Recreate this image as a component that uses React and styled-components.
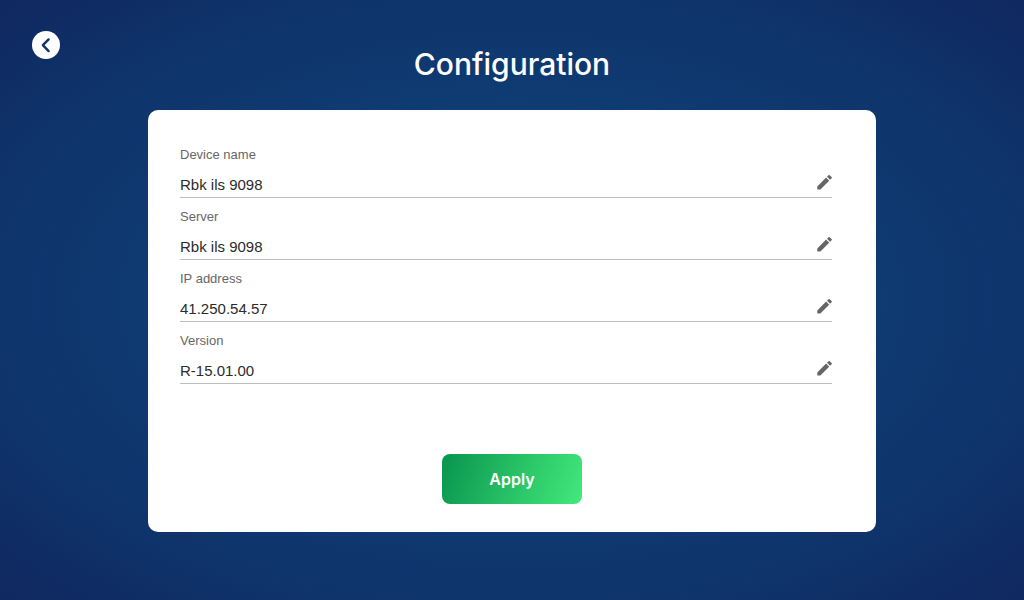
import React from "react";
import styled, { createGlobalStyle } from "styled-components";

const GlobalStyle = createGlobalStyle`
  * {
    box-sizing: border-box;
  }

  body {
    margin: 0;
    font-family: "Liberation Sans", Arial, sans-serif;
  }
`;

const Page = styled.div`
  display: flex;
  flex-direction: column;
  min-height: 100vh;
  background: radial-gradient(farthest-corner at 50% 50%, #0e4479 0%, #0e3e74 40%, #0f346c 72%, #102860 100%);
`;

const Header = styled.header`
  display: grid;
  grid-template-columns: 1fr auto 1fr;
  align-items: start;
  padding: 31px 32px 26px;
`;

const BackButton = styled.button`
  display: flex;
  align-items: center;
  justify-content: center;
  width: 28px;
  height: 28px;
  padding: 0;
  border: 0;
  border-radius: 50%;
  background: #ffffff;
  color: #103269;
  cursor: pointer;
`;

const Title = styled.h1`
  margin: 13px 0 0;
  font-family: Inter, "Liberation Sans", sans-serif;
  font-size: 30px;
  font-weight: 500;
  line-height: 40px;
  color: #ffffff;
`;

const Card = styled.form`
  display: flex;
  flex-direction: column;
  width: calc(100% - 64px);
  max-width: 728px;
  margin: 0 auto 32px;
  padding: 26px 44px 28px 32px;
  border-radius: 10px;
  background: #ffffff;
`;

const Field = styled.div`
  display: flex;
  flex-direction: column;
  gap: 10px;
  padding-top: 11px;
`;

const Label = styled.label`
  font-size: 13px;
  line-height: 16px;
  color: #666666;
`;

const InputRow = styled.div`
  display: flex;
  align-items: center;
  border-bottom: 1px solid #bdbdbd;
`;

const Input = styled.input`
  flex: 1;
  min-width: 0;
  height: 24px;
  padding: 0;
  border: 0;
  outline: 0;
  background: transparent;
  font-family: inherit;
  font-size: 15px;
  line-height: 24px;
  color: #2b2b2b;
`;

const EditButton = styled.button`
  display: flex;
  align-items: flex-start;
  height: 24px;
  padding: 0;
  border: 0;
  background: transparent;
  color: #666666;
  cursor: pointer;
`;

const Actions = styled.div`
  display: flex;
  justify-content: center;
  margin-top: 70px;
  padding-left: 12px;
`;

const ApplyButton = styled.button`
  width: 140px;
  height: 50px;
  border: 0;
  border-radius: 8px;
  background: linear-gradient(110deg, #08944f 0%, #27c065 50%, #42e97c 100%);
  font-family: Inter, "Liberation Sans", sans-serif;
  font-size: 16px;
  font-weight: 600;
  color: #ffffff;
  cursor: pointer;
`;

const fields = [
  { id: "device-name", label: "Device name", value: "Rbk ils 9098" },
  { id: "server", label: "Server", value: "Rbk ils 9098" },
  { id: "ip-address", label: "IP address", value: "41.250.54.57" },
  { id: "version", label: "Version", value: "R-15.01.00" },
];

const ChevronLeft = () => (
  <svg width="28" height="28" viewBox="0 0 28 28" fill="none" aria-hidden="true">
    <path d="M16.6 8.4 10.9 14.2l5.7 5.9" stroke="currentColor" strokeWidth="2.4" strokeLinecap="round" strokeLinejoin="round" />
  </svg>
);

const Pencil = () => (
  <svg width="15" height="18" viewBox="0 0 15 18" fill="currentColor" aria-hidden="true">
    <path d="M.3 13.4v3.1h3.1l8.8-8.8-3.1-3.1zM14.6 5.3a.9.9 0 0 0 0-1.2l-1.9-1.9a.9.9 0 0 0-1.2 0L10 3.7l3.1 3.1z" />
  </svg>
);

export default function App() {
  return (
    <>
      <GlobalStyle />
      <Page>
        <Header>
          <BackButton type="button" aria-label="Back">
            <ChevronLeft />
          </BackButton>
          <Title>Configuration</Title>
        </Header>
        <Card onSubmit={(event) => event.preventDefault()}>
          {fields.map(({ id, label, value }) => (
            <Field key={id}>
              <Label htmlFor={id}>{label}</Label>
              <InputRow>
                <Input id={id} type="text" defaultValue={value} />
                <EditButton type="button" aria-label={`Edit ${label}`}>
                  <Pencil />
                </EditButton>
              </InputRow>
            </Field>
          ))}
          <Actions>
            <ApplyButton type="submit">Apply</ApplyButton>
          </Actions>
        </Card>
      </Page>
    </>
  );
}
